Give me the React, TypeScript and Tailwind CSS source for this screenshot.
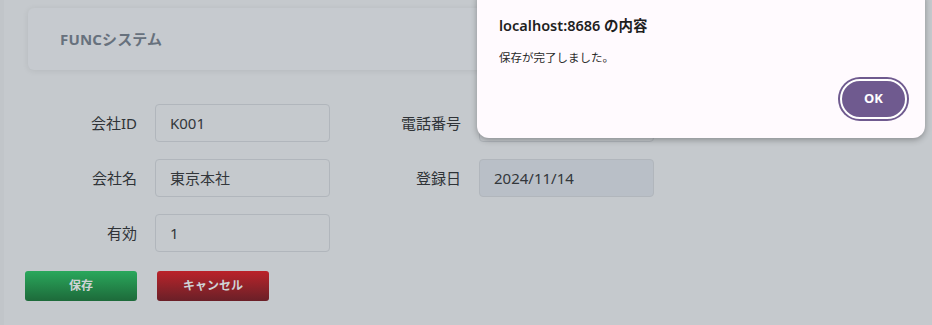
import React from "react";

const JP = "font-['Noto_Sans','Noto_Sans_CJK_JP',sans-serif]";

interface FieldProps {
  label: string;
  value: string;
  disabled?: boolean;
}

// 項目ラベル + 入力欄
function Field({ label, value, disabled }: FieldProps) {
  return (
    <div className="flex items-center">
      <label className="w-[100px] text-right text-[15px] text-[#2f3337] leading-none">{label}</label>
      <div
        className={`ml-[18px] w-[175px] h-[38px] rounded-[4px] border border-[#b1b6bc] flex items-center px-[14px] text-[15px] text-[#33373b] ${
          disabled ? "bg-[#b9bfc7]" : "bg-[#c5c9cd]"
        }`}
      >
        {value}
      </div>
    </div>
  );
}

export default function App() {
  return (
    <div className={`relative w-[932px] h-[325px] overflow-hidden bg-[#c5c9cd] ${JP}`}>
      <div className="h-full border-l-[4px] border-[#c1c5c9]">
        {/* ヘッダー */}
        <div className="pt-[8px] pl-[24px] pr-[24px]">
          <div className="h-[62px] rounded-[6px] bg-[#c6cacf] shadow-[0_1px_6px_rgba(0,0,0,0.08)] flex items-center pl-[32px]">
            <h1 className="text-[15px] font-bold text-[#67717d] tracking-[0.01em]">FUNCシステム</h1>
          </div>
        </div>

        {/* フォーム */}
        <div className="pl-[33px] pt-[34px] flex flex-col gap-[17px]">
          <div className="flex gap-[31px]">
            <Field label="会社ID" value="K001" />
            <Field label="電話番号" value="" />
          </div>
          <div className="flex gap-[31px]">
            <Field label="会社名" value="東京本社" />
            <Field label="登録日" value="2024/11/14" disabled />
          </div>
          <div className="flex gap-[31px]">
            <Field label="有効" value="1" />
          </div>
        </div>

        {/* ボタン */}
        <div className="flex gap-[20px] pl-[21px] mt-[19px]">
          <button className="w-[112px] h-[30px] rounded-[3px] bg-gradient-to-b from-[#2aa85c] to-[#1d6a3a] text-[12px] font-bold text-[#cfd3d6]">
            保存
          </button>
          <button className="w-[112px] h-[30px] rounded-[3px] bg-gradient-to-b from-[#bb2229] to-[#6a1f27] text-[12px] font-bold text-[#cfd3d6]">
            キャンセル
          </button>
        </div>
      </div>

      {/* アラートダイアログ */}
      <div className="absolute left-[477px] top-[-12px] w-[448px] h-[150px] rounded-[12px] bg-[#fffafe] shadow-[0_2px_6px_rgba(0,0,0,0.3)]">
        <div className="pl-[22px] pt-[30px]">
          <p className="text-[14.5px] font-semibold text-[#1f1f1f] leading-none">localhost:8686 の内容</p>
          <p className="mt-[19px] text-[11.5px] text-[#2a2a2a] leading-none">保存が完了しました。</p>
        </div>
        <div className="absolute right-[18px] top-[91px]">
          <button className="w-[67px] h-[40px] rounded-full bg-[#6f5a8f] border-2 border-white ring-2 ring-[#6f5a8f] text-[13px] font-bold text-white">
            OK
          </button>
        </div>
      </div>
    </div>
  );
}
